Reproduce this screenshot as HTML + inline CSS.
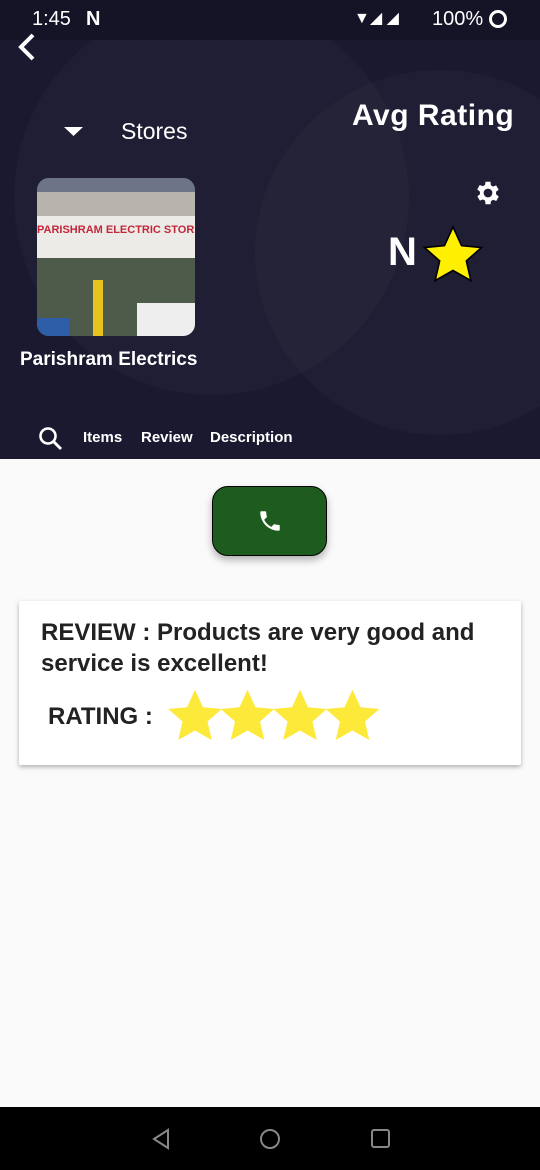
<!DOCTYPE html>
<html><head><meta charset="utf-8"><style>
body{margin:0;width:540px;height:1170px;position:relative;overflow:hidden;background:#fafafa;font-family:"Liberation Sans",sans-serif}
.hdr{position:absolute;left:0;top:0;width:540px;height:459px;background:#1a1930;overflow:hidden}
.c{position:absolute;border-radius:50%;background:rgba(255,255,255,0.022)}
.sb{position:absolute;left:0;top:0;width:540px;height:40px;background:#151427;color:#fff;font-size:20px}
.w{position:absolute;color:#fff;font-weight:bold;white-space:nowrap}
.card{position:absolute;left:19px;top:601px;width:502px;height:164px;background:#fff;box-shadow:0 2px 5px rgba(0,0,0,.3);border-radius:2px}
.nav{position:absolute;left:0;top:1107px;width:540px;height:63px;background:#000}
</style></head><body>
<div class="hdr">
<div class="c" style="left:14px;top:0;width:395px;height:395px"></div>
<div class="c" style="left:255px;top:70px;width:370px;height:365px"></div>
<div class="sb"><span style="position:absolute;left:32px;top:8px">1:45</span><span style="position:absolute;left:86px;top:8px;font-weight:bold">N</span><span style="position:absolute;left:354px;top:8px;font-size:16px">▼◢ ◢</span><span style="position:absolute;left:432px;top:8px">100%</span><span style="position:absolute;left:489px;top:10px;width:12px;height:12px;border:3px solid #fff;border-radius:50%"></span></div>
<svg style="position:absolute;left:14px;top:32px" width="26" height="30"><path d="M19 3 L7 15 L19 27" stroke="#fff" stroke-width="4" fill="none"/></svg>
<svg style="position:absolute;left:64px;top:127px" width="20" height="10"><path d="M0 0 H19 L9.5 9Z" fill="#fff"/></svg>
<div class="w" style="left:121px;top:118px;font-size:23px;font-weight:normal">Stores</div>
<div class="w" style="left:352px;top:99px;font-size:30px;letter-spacing:0.5px">Avg Rating</div>
<div style="position:absolute;left:37px;top:178px;width:158px;height:158px;border-radius:12px;overflow:hidden;background:#7a7f88">
<div style="position:absolute;left:0;top:0;width:158px;height:14px;background:#6d7488"></div>
<div style="position:absolute;left:0;top:14px;width:158px;height:24px;background:#b6b4ad"></div>
<div style="position:absolute;left:0;top:38px;width:158px;height:42px;background:#ecebe8;color:#c2283a;font-size:11px;font-weight:bold;line-height:28px;white-space:nowrap;overflow:hidden">PARISHRAM ELECTRIC STORE</div>
<div style="position:absolute;left:0;top:80px;width:158px;height:78px;background:#4e5a4a"></div>
<div style="position:absolute;left:100px;top:125px;width:58px;height:33px;background:#eee"></div>
<div style="position:absolute;left:0;top:140px;width:32px;height:18px;background:#2e5ea8"></div>
<div style="position:absolute;left:56px;top:102px;width:10px;height:56px;background:#e8c21f"></div>
</div>
<div class="w" style="left:20px;top:349px;font-size:19px">Parishram Electrics</div>
<svg style="position:absolute;left:473px;top:178px" width="30" height="30" viewBox="0 0 24 24"><path fill="#fff" d="M19.4 13a7.5 7.5 0 000-2l2.1-1.6-2-3.5-2.5 1a7.6 7.6 0 00-1.7-1L15 3h-4l-.4 2.6a7.6 7.6 0 00-1.7 1l-2.5-1-2 3.5L6.6 11a7.5 7.5 0 000 2l-2.1 1.6 2 3.5 2.5-1a7.6 7.6 0 001.7 1L11 21h4l.4-2.6a7.6 7.6 0 001.7-1l2.5 1 2-3.5zM13 15.5a3.5 3.5 0 110-7 3.5 3.5 0 010 7z" transform="translate(-1 0)"/></svg>
<div class="w" style="left:388px;top:230px;font-size:40px">N</div>
<svg style="position:absolute;left:421px;top:224px" width="64" height="62" viewBox="0 0 24 23"><path d="M12 1l3.2 7 7.5.7-5.7 5 1.7 7.4L12 17.3 5.3 21.1 7 13.7l-5.7-5 7.5-.7z" fill="#ffef00" stroke="#000" stroke-width=".6"/></svg>
<svg style="position:absolute;left:38px;top:426px" width="26" height="26"><circle cx="10" cy="10" r="7.5" stroke="#fff" stroke-width="2.6" fill="none"/><path d="M15 15 L23 23" stroke="#fff" stroke-width="3"/></svg>
<div class="w" style="left:83px;top:429px;font-size:15px">Items</div>
<div class="w" style="left:141px;top:429px;font-size:15px">Review</div>
<div class="w" style="left:210px;top:429px;font-size:15px">Description</div>
</div>
<div style="position:absolute;left:212px;top:486px;width:113px;height:68px;border:1.5px solid #000;border-radius:16px;background:#1d5c1e;box-shadow:0 4px 8px rgba(0,0,0,.3)">
<svg style="position:absolute;left:44px;top:21px" width="26" height="26" viewBox="0 0 24 24"><path fill="#fff" d="M6.6 10.8a15 15 0 006.6 6.6l2.2-2.2c.3-.3.7-.4 1-.2 1.1.4 2.3.6 3.6.6.6 0 1 .4 1 1V20c0 .6-.4 1-1 1A17 17 0 013 4c0-.6.4-1 1-1h3.5c.6 0 1 .4 1 1 0 1.3.2 2.5.6 3.6.1.3 0 .7-.2 1z"/></svg></div>
<div class="card">
<div style="position:absolute;left:22px;top:16px;font-size:24px;font-weight:bold;color:#222;line-height:31px;width:470px">REVIEW : Products are very good and service is excellent!</div>
<div style="position:absolute;left:29px;top:102px;font-size:24px;font-weight:bold;color:#222">RATING :</div>
<svg style="position:absolute;left:146px;top:86px" width="220" height="58" viewBox="0 0 88 23"><g fill="#fde93a"><path id="s" d="M12 1l3.2 7 7.5.7-5.7 5 1.7 7.4L12 17.3 5.3 21.1 7 13.7l-5.7-5 7.5-.7z"/><use href="#s" x="21"/><use href="#s" x="42"/><use href="#s" x="63"/></g></svg>
</div>
<div class="nav">
<svg style="position:absolute;left:150px;top:21px" width="22" height="22"><path d="M18 2 L4 11 L18 20Z" stroke="#888" stroke-width="2" fill="none"/></svg>
<div style="position:absolute;left:260px;top:22px;width:16px;height:16px;border:2px solid #888;border-radius:50%"></div>
<div style="position:absolute;left:371px;top:22px;width:15px;height:15px;border:2px solid #888;border-radius:3px"></div>
</div>
</body></html>
